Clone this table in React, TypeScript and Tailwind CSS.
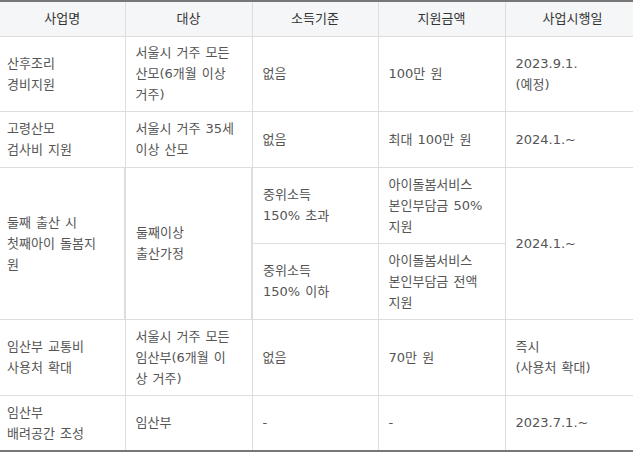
import React from "react";

const th = "h-[35px] border-b border-r border-[#ddd] bg-[#f5f6f8] text-center font-normal text-[#333] px-[10px]";
const td = "border-b border-r border-[#ddd] px-[10px] align-middle whitespace-nowrap";

export default function App() {
  return (
    <div
      className="w-[633px] h-[455px] overflow-hidden bg-white"
      style={{ fontFamily: '"DejaVu Sans", "Noto Sans CJK KR", sans-serif' }}
    >
      <table className="w-[640px] table-fixed border-collapse border-t-2 border-b-2 border-t-[#777] border-b-[#777] text-[13px] leading-[21px] text-[#555] [word-spacing:1px]">
        <colgroup>
          <col className="w-[125px]" />
          <col className="w-[127px]" />
          <col className="w-[126px]" />
          <col className="w-[127px]" />
          <col className="w-[135px]" />
        </colgroup>
        <thead>
          <tr>
            <th className={th}>사업명</th>
            <th className={th}>대상</th>
            <th className={th}>소득기준</th>
            <th className={th}>지원금액</th>
            <th className={th}>사업시행일</th>
          </tr>
        </thead>
        <tbody>
          <tr className="h-[75px]">
            <td className={`${td} pl-[7px]`}>산후조리<br />경비지원</td>
            <td className={td}>서울시 거주 모든<br />산모(6개월 이상<br />거주)</td>
            <td className={td}>없음</td>
            <td className={td}>100만 원</td>
            <td className={td}>2023.9.1.<br />(예정)</td>
          </tr>
          <tr className="h-[56px]">
            <td className={`${td} pl-[7px]`}>고령산모<br />검사비 지원</td>
            <td className={td}>서울시 거주 35세<br />이상 산모</td>
            <td className={td}>없음</td>
            <td className={td}>최대 100만 원</td>
            <td className={td}>2024.1.~</td>
          </tr>
          <tr className="h-[76px]">
            <td rowSpan={2} className={`${td} pl-[7px] border-r-2`}>둘째 출산 시<br />첫째아이 돌봄지<br />원</td>
            <td rowSpan={2} className={`${td} border-r-2`}>둘째이상<br />출산가정</td>
            <td className={td}>중위소득<br />150% 초과</td>
            <td className={td}>아이돌봄서비스<br />본인부담금 50%<br />지원</td>
            <td rowSpan={2} className={td}>2024.1.~</td>
          </tr>
          <tr className="h-[76px]">
            <td className={td}>중위소득<br />150% 이하</td>
            <td className={td}>아이돌봄서비스<br />본인부담금 전액<br />지원</td>
          </tr>
          <tr className="h-[76px]">
            <td className={`${td} pl-[7px]`}>임산부 교통비<br />사용처 확대</td>
            <td className={td}>서울시 거주 모든<br />임산부(6개월 이<br />상 거주)</td>
            <td className={td}>없음</td>
            <td className={td}>70만 원</td>
            <td className={td}>즉시<br />(사용처 확대)</td>
          </tr>
          <tr className="h-[56px]">
            <td className={`${td} pl-[7px] border-b-0`}>임산부<br />배려공간 조성</td>
            <td className={`${td} border-b-0`}>임산부</td>
            <td className={`${td} border-b-0`}>-</td>
            <td className={`${td} border-b-0`}>-</td>
            <td className={`${td} border-b-0`}>2023.7.1.~</td>
          </tr>
        </tbody>
      </table>
    </div>
  );
}
